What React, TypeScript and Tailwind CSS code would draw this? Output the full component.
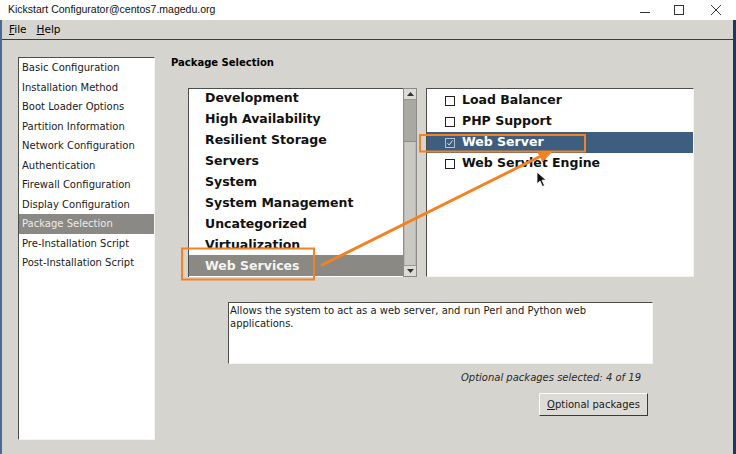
import React from 'react';

const sections = [
  'Basic Configuration',
  'Installation Method',
  'Boot Loader Options',
  'Partition Information',
  'Network Configuration',
  'Authentication',
  'Firewall Configuration',
  'Display Configuration',
  'Package Selection',
  'Pre-Installation Script',
  'Post-Installation Script',
];

const groups = [
  'Development',
  'High Availability',
  'Resilient Storage',
  'Servers',
  'System',
  'System Management',
  'Uncategorized',
  'Virtualization',
  'Web Services',
];

const packages = [
  { name: 'Load Balancer', checked: false },
  { name: 'PHP Support', checked: false },
  { name: 'Web Server', checked: true },
  { name: 'Web Servlet Engine', checked: false },
];

export default function App() {
  return (
    <div className="relative w-[736px] h-[454px] overflow-hidden bg-[#d5d4cf] font-['DejaVu_Sans',sans-serif] text-[10px] text-black">
      {/* title bar */}
      <div className="flex h-[20px] items-center bg-white pl-[8px] pr-[15px] font-['Liberation_Sans',sans-serif] text-[10.5px] text-[#111]">
        <span>Kickstart Configurator@centos7.magedu.org</span>
        <div className="ml-auto flex items-center">
          <svg width="10" height="10" viewBox="0 0 10 10" className="mr-[24px]">
            <path d="M0 7.5H10" stroke="#333" strokeWidth="1" />
          </svg>
          <svg width="10" height="10" viewBox="0 0 10 10" className="mr-[27px]">
            <rect x="0.5" y="0.5" width="9" height="9" fill="none" stroke="#333" strokeWidth="1" />
          </svg>
          <svg width="10" height="10" viewBox="0 0 10 10">
            <path d="M0 0L10 10M10 0L0 10" stroke="#333" strokeWidth="1" />
          </svg>
        </div>
      </div>

      <div className="flex h-[434px] flex-col border-l-[2px] border-r-[3px] border-l-[#4a6a96] border-r-[#1c3761]">
        {/* menu bar */}
        <div className="flex h-[20px] items-center gap-[10px] border-b border-[#3c3c3a] pl-[7px] text-[10.5px]">
          <span><span className="underline">F</span>ile</span>
          <span><span className="underline">H</span>elp</span>
        </div>

        <div className="flex pl-[16px] pt-[17px]">
          {/* section list */}
          <div className="w-[137px] h-[383px] shrink-0 border-t border-l border-b border-r border-t-[#4d4d4b] border-l-[#4d4d4b] border-b-[#f4f4f2] border-r-[#f4f4f2] bg-white">
            {sections.map((s) => (
              <div
                key={s}
                className={`h-[19.5px] leading-[19.5px] pl-[3px] ${
                  s === 'Package Selection' ? 'bg-[#8b8985] text-[#ecebe8]' : 'text-[#1a1a1a]'
                }`}
              >
                {s}
              </div>
            ))}
          </div>

          {/* main area */}
          <div className="ml-[16px] w-[540px] shrink-0">
            <div className="-mt-[1px] h-[13px] leading-[13px] font-bold">Package Selection</div>

            <div className="mt-[19px] ml-[17px] flex">
              {/* groups */}
              <div className="w-[215px] h-[189px] shrink-0 overflow-hidden border-t border-l border-[#4d4d4b] bg-white">
                <div className="-mt-[2px]">
                  {groups.map((g) => (
                    <div
                      key={g}
                      className={`h-[21px] leading-[21px] pl-[16px] font-bold text-[12.5px] ${
                        g === 'Web Services' ? 'bg-[#8a8984] text-[#f4f4f2]' : 'text-[#111]'
                      }`}
                    >
                      {g}
                    </div>
                  ))}
                </div>
              </div>

              {/* scrollbar */}
              <div className="flex w-[14px] h-[189px] shrink-0 flex-col border border-[#8c8b86] bg-[#c9c8c3]">
                <div className="flex h-[11px] items-center justify-center border-b border-[#9a9994] bg-[#dcdbd6]">
                  <svg width="7" height="4" viewBox="0 0 7 4">
                    <path d="M0 4L3.5 0L7 4Z" fill="#333" />
                  </svg>
                </div>
                <div className="h-[42px] bg-[#a9a8a3] border-b border-[#8f8e89]" />
                <div className="flex-1 border-l border-r border-[#b9b8b3]" />
                <div className="flex h-[11px] items-center justify-center border-t border-[#9a9994] bg-[#dcdbd6]">
                  <svg width="7" height="4" viewBox="0 0 7 4">
                    <path d="M0 0L3.5 4L7 0Z" fill="#333" />
                  </svg>
                </div>
              </div>

              {/* packages */}
              <div className="ml-[9px] w-[268px] h-[189px] shrink-0 overflow-hidden border-t border-l border-b border-r border-t-[#4d4d4b] border-l-[#4d4d4b] border-b-[#f4f4f2] border-r-[#f4f4f2] bg-white pt-[1px]">
                {packages.map((p) => (
                  <div
                    key={p.name}
                    className={`flex h-[21px] items-center pl-[18px] font-bold text-[12.5px] ${
                      p.checked ? 'bg-[#3e5e80] text-white' : 'text-[#111]'
                    }`}
                  >
                    <span
                      className={`mr-[7px] flex w-[10px] h-[10px] items-center justify-center border ${
                        p.checked ? 'border-[#b5c1cf] bg-[#3e5e80]' : 'border-[#222] bg-white'
                      }`}
                    >
                      {p.checked && (
                        <svg width="8" height="8" viewBox="0 0 8 8">
                          <path d="M1.5 4.2L3.2 6L6.5 1.5" fill="none" stroke="#dde3ea" strokeWidth="1" />
                        </svg>
                      )}
                    </span>
                    {p.name}
                  </div>
                ))}
              </div>
            </div>

            {/* description */}
            <div className="mt-[25px] ml-[57px] w-[425px] h-[62px] border-t border-l border-b border-r border-t-[#4d4d4b] border-l-[#4d4d4b] border-b-[#f4f4f2] border-r-[#f4f4f2] bg-white pl-[1px] pt-[1px] leading-[13px] text-[#1a1a1a]">
              Allows the system to act as a web server, and run Perl and Python web
              <br />
              applications.
            </div>

            <div className="mt-[7px] pr-[70px] text-right italic leading-[13px] text-[#2a2a2a]">
              Optional packages selected: 4 of 19
            </div>

            <div className="mt-[9px] ml-[368px] flex w-[109px] h-[23px] items-center justify-center border border-t-[#fbfbfa] border-l-[#fbfbfa] border-b-[#3a3a38] border-r-[#3a3a38] bg-[#dcdbd6] text-[#1a1a1a]">
              <span><span className="underline">O</span>ptional packages</span>
            </div>
          </div>
        </div>
      </div>

      {/* annotation overlay */}
      <svg className="pointer-events-none absolute left-0 top-0" width="736" height="454" viewBox="0 0 736 454">
        <rect x="182" y="248.5" width="132" height="31" fill="none" stroke="#f58220" strokeWidth="2" />
        <rect x="420" y="135" width="165" height="16.5" fill="none" stroke="#f58220" strokeWidth="2" />
        <path d="M322 265L543 155" stroke="#f58220" strokeWidth="3" strokeLinecap="round" />
        <path d="M553 151L542.6 162L537.5 152.5Z" fill="#f58220" />
        {/* mouse cursor */}
        <path
          d="M537 172L537 184L540 181L542.5 186.5L544.5 185.5L542 180.2L546 180Z"
          fill="#111"
          stroke="#fff"
          strokeWidth="0.8"
        />
      </svg>
    </div>
  );
}
